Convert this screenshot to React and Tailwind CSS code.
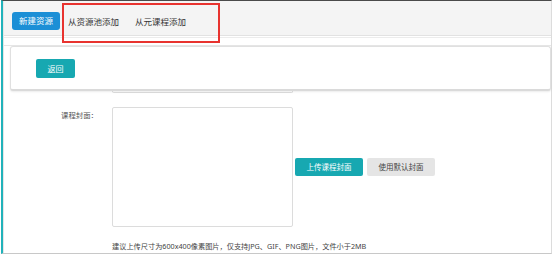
import React from 'react';

const font = { fontFamily: '"Noto Sans", "Noto Sans CJK SC", sans-serif' };

const App = () => {
  return (
    <div className="relative w-[553px] h-[256px] bg-white overflow-hidden" style={font}>
      {/* 外框 */}
      <div className="ml-[1px] w-[551px] h-[254px] border-t border-t-[#4a4a4a] border-l-2 border-l-[#21b2ba] border-r border-r-[#dcdcdc] border-b border-b-[#c8c8c8] flex flex-col">
        <div className="flex-1 border-l border-l-[#e6e6e6] flex flex-col">
          {/* 标签栏 */}
          <div className="h-[35px] bg-[#f4f4f4] border-b border-b-[#e2e2e2] flex items-start pt-[11px] pl-[8px] shrink-0">
            <button className="h-[18px] w-[48px] rounded-[3px] bg-[#1c8fd6] text-white text-[8.5px] leading-[18px]">
              新建资源
            </button>
            <div className="px-[8px] h-[18px] leading-[20px] text-[8.5px] text-[#333]">从资源池添加</div>
            <div className="px-[8px] h-[18px] leading-[20px] text-[8.5px] text-[#333]">从元课程添加</div>
          </div>

          {/* 滚动区顶部 */}
          <div className="h-[10px] shrink-0 pt-[1px]">
            <div className="h-[9px] border-t border-t-[#ececec] border-b border-b-[#e6e6e6]"></div>
          </div>

          {/* 返回卡片 */}
          <div className="ml-[6px] h-[45px] shrink-0 bg-white border border-[#e0e0e0] border-b-2 border-b-[#dadada] rounded-[3px] shadow-[0_1px_2px_rgba(0,0,0,0.08)] flex items-start pt-[12px] pl-[25px] relative z-10">
            <button className="h-[19px] w-[39px] rounded-[2px] bg-[#17a8b1] text-white text-[8px] leading-[19px]">
              返回
            </button>
          </div>

          {/* 被遮住的输入框底边 */}
          <div className="ml-[108px] w-[181px] h-[3px] -mt-[1px] border-x border-b border-[#dddddd] rounded-b-[2px] shrink-0"></div>

          {/* 课程封面 */}
          <div className="flex mt-[14px] shrink-0">
            <div className="w-[108px] text-right text-[7.4px] text-[#555] pt-[3px] pr-[14px] leading-[10px]">课程封面：</div>
            <div className="w-[181px] h-[120px] border border-[#dcdcdc] rounded-[2px] bg-white"></div>
            <div className="flex items-center gap-[4px] ml-[2px]">
              <button className="h-[18px] w-[68px] rounded-[2px] bg-[#17a8b1] text-white text-[7.5px] leading-[18px]">
                上传课程封面
              </button>
              <button className="h-[18px] w-[68px] rounded-[2px] bg-[#e5e5e5] text-[#444] text-[7.5px] leading-[18px]">
                使用默认封面
              </button>
            </div>
          </div>

          <div className="ml-[108px] mt-[14px] text-[7.2px] text-[#444] leading-[10px] whitespace-nowrap">
            建议上传尺寸为600x400像素图片，仅支持JPG、GIF、PNG图片，文件小于2MB
          </div>
        </div>
      </div>

      {/* 红色标注框 */}
      <div className="absolute left-[62px] top-[3px] w-[158px] h-[40px] border-2 border-[#e8332f]"></div>
    </div>
  );
};

export default App;
